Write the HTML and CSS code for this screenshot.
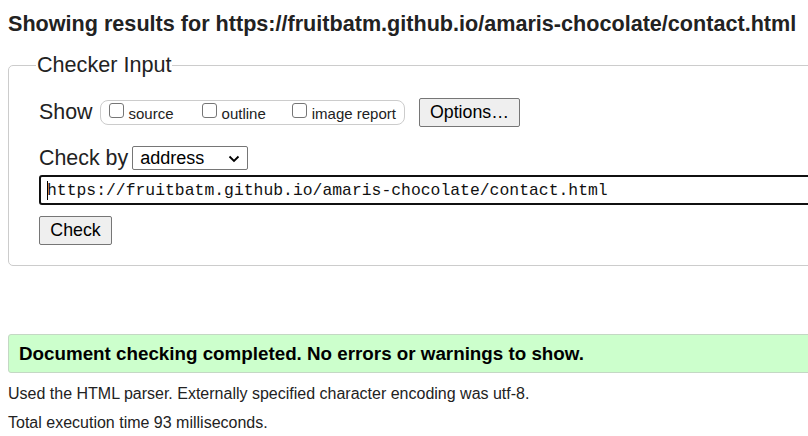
FILE: index.html
```html
<!DOCTYPE html>
<html>
<head>
<meta charset="utf-8">
<link rel="stylesheet" href="styles.css">
</head>
<body>
<h2 class="title">Showing results for https://fruitbatm.github.io/amaris-chocolate/contact.html</h2>
<fieldset class="checker">
  <legend class="legend">Checker Input</legend>
  <div class="row show-row">
    <span class="label">Show</span>
    <span class="pill">
      <label class="opt"><span class="box"></span>source</label>
      <label class="opt"><span class="box"></span>outline</label>
      <label class="opt"><span class="box"></span>image report</label>
    </span>
    <span class="btn options">Options…</span>
  </div>
  <div class="row checkby-row">
    <span class="label">Check by</span>
    <span class="select">address
      <svg class="chev" width="12" height="8" viewBox="0 0 12 8"><path d="M1.5 1.5 L6 6 L10.5 1.5" fill="none" stroke="#000" stroke-width="1.8"/></svg>
    </span>
  </div>
  <div class="urlbox"><span class="caret"></span>https://fruitbatm.github.io/amaris-chocolate/contact.html</div>
  <div class="row"><span class="btn check">Check</span></div>
</fieldset>
<div class="success">Document checking completed. No errors or warnings to show.</div>
<p class="info">Used the HTML parser. Externally specified character encoding was utf-8.</p>
<p class="info">Total execution time 93 milliseconds.</p>
</body>
</html>
```
FILE: styles.css
```css
html, body { margin: 0; padding: 0; background: #fff; overflow: hidden; }
body {
  width: 840px;
  padding: 0 0 0 8px;
  font-family: "Liberation Sans", Arial, sans-serif;
  color: #222;
}
.title {
  margin: 0;
  padding-top: 12px;
  font-size: 21.6px;
  font-weight: bold;
  line-height: 24px;
  color: #222;
  white-space: nowrap;
}
.checker {
  margin: 17px 0 0 0;
  padding: 12px 0 20px 30px;
  border: 1px solid #ccc;
  border-radius: 5px;
  width: 820px;
  box-sizing: border-box;
  height: 213px;
}
.legend {
  font-size: 21.6px;
  padding: 0 1px;
  margin-left: -3px;
  line-height: 24px;
  color: #222;
}
.row { display: flex; align-items: center; }
.label { font-size: 21.4px; color: #222; }
.show-row { height: 28px; margin-top: 9px; }
.pill {
  display: flex;
  align-items: center;
  margin-left: 7px;
  height: 25px;
  box-sizing: border-box;
  border: 1px solid #ccc;
  border-radius: 8px;
  padding: 0 8px 0 8px;
}
.opt { display: flex; align-items: center; font-size: 15px; color: #222; margin-right: 28px; position: relative; top: 1px; }
.opt:nth-child(2) { margin-right: 26px; }
.opt:last-child { margin-right: 0; }
.box {
  width: 15px; height: 15px; box-sizing: border-box;
  border: 1px solid #767676; border-radius: 3px; background: #fff;
  margin-right: 5px; position: relative; top: -3px;
}
.btn {
  display: inline-flex; align-items: center; justify-content: center;
  box-sizing: border-box;
  background: #efefef;
  border: 1px solid #767676;
  border-radius: 2px;
  font-size: 17.8px;
  color: #000;
}
.options { margin-left: 14px; width: 101px; height: 29px; }
.checkby-row { margin-top: 20px; height: 24px; }
.select {
  margin-left: 4px;
  width: 116px; height: 24px; box-sizing: border-box;
  border: 1px solid #767676; border-radius: 2px;
  font-size: 18px; color: #000;
  display: flex; align-items: center; padding-left: 7px;
  position: relative;
}
.chev { position: absolute; right: 7px; top: 8px; }
.urlbox {
  margin-top: 5px;
  height: 30px; box-sizing: border-box;
  border: 2px solid #101010; border-radius: 3px;
  font-family: "Liberation Mono", "DejaVu Sans Mono", monospace;
  font-size: 16.4px; color: #111;
  display: flex; align-items: center;
  padding-left: 6px;
}
.caret { display: inline-block; width: 1px; height: 19px; background: #000; margin-right: -1px; }
.check { margin-top: 11px; width: 73px; height: 29px; }
.success {
  margin-top: 68px;
  height: 39px; box-sizing: border-box;
  width: 820px;
  background: #ccffcc;
  border: 1px solid #c4d8c4;
  border-radius: 3px;
  font-weight: bold;
  font-size: 18.8px;
  color: #000;
  padding-left: 10px;
  display: flex; align-items: center;
}
.info { margin: 12px 0 0 0; font-size: 16px; color: #222; line-height: 17px; }
.info + .info { margin-top: 12px; }
```
